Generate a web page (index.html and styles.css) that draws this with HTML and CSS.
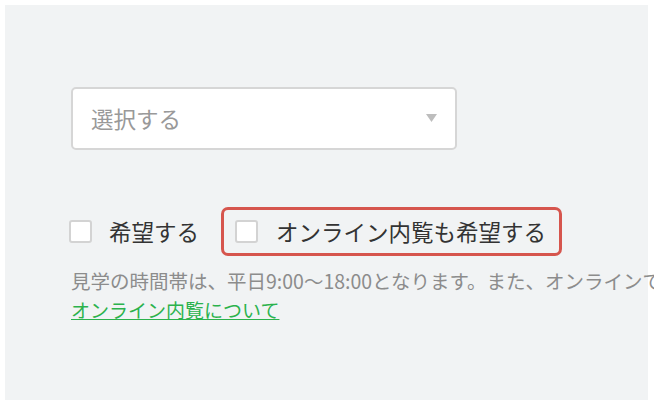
FILE: index.html
```html
<!DOCTYPE html>
<html lang="ja">
<head>
  <meta charset="utf-8">
  <title>見学予約</title>
  <link rel="stylesheet" href="styles.css">
</head>
<body>
  <div class="panel">
    <div class="select">
      <span class="select-text">選択する</span>
      <svg class="select-arrow" width="11" height="8" viewBox="0 0 11 8"><path d="M0 0 L11 0 L5.5 8 Z" fill="#bdbdbd"/></svg>
    </div>

    <div class="options">
      <label class="option">
        <input type="checkbox" class="check">
        <span class="option-text">希望する</span>
      </label>
      <label class="option option-marked">
        <input type="checkbox" class="check">
        <span class="option-text">オンライン内覧も希望する</span>
      </label>
    </div>

    <p class="note">見学の時間帯は、平日9:00〜18:00となります。また、オンラインでの内覧も受け付けております。<br>
      <a class="note-link" href="#">オンライン内覧について</a>
    </p>
  </div>
</body>
</html>
```

FILE: styles.css
```css
html, body {
	margin: 0;
	background: #fff;
}
body {
	font-family: "Noto Sans CJK JP", "Noto Sans", sans-serif;
	color: #333;
	overflow: hidden;
}
.panel {
	margin: 5px 6px 6px 5px;
	height: 395px;
	background: #f1f3f4;
	padding: 82px 0 0 66px;
	box-sizing: border-box;
}
.select {
	width: 386px;
	height: 63px;
	box-sizing: border-box;
	background: #fff;
	border: 2px solid #d6d6d6;
	border-radius: 5px;
	display: flex;
	align-items: center;
	justify-content: space-between;
	padding: 0 18px 2px 18px;
}
.select-text {
	font-size: 22.5px;
	color: #999;
}
.select-arrow {
	display: block;
}
.options {
	display: flex;
	align-items: center;
	gap: 22px;
	margin: 57px 0 0 -2px;
}
.option {
	display: flex;
	align-items: center;
	gap: 17px;
	font-size: 22.5px;
	line-height: 1;
}
.option-marked {
	border: 3px solid #d6554d;
	border-radius: 7px;
	height: 49px;
	box-sizing: border-box;
	padding: 0 13px 0 11px;
	gap: 18px;
}
.check {
	appearance: none;
	-webkit-appearance: none;
	margin: 0;
	width: 23px;
	height: 23px;
	box-sizing: border-box;
	background: #fff;
	border: 2px solid #d3d3d3;
	border-radius: 3px;
}
.note {
	margin: 10px 0 0;
	font-size: 19.5px;
	line-height: 29px;
	color: #8c8c8c;
	white-space: nowrap;
}
.note-link {
	font-size: 19px;
	color: #2bb24c;
	text-decoration: underline;
}
```
